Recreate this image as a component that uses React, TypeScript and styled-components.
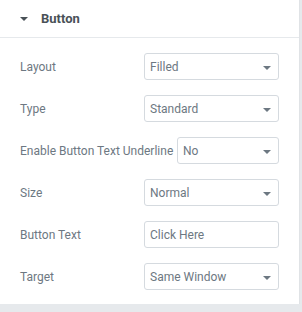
import React from "react";
import styled, { createGlobalStyle } from "styled-components";

const GlobalStyle = createGlobalStyle`
  html, body {
    margin: 0;
    padding: 0;
    background: #e6e9ec;
    font-family: Roboto, "Liberation Sans", Arial, sans-serif;
  }
`;

type Control =
  | { label: string; kind: "select"; value: string; wide?: boolean }
  | { label: string; kind: "text"; value: string };

const controls: Control[] = [
  { label: "Layout", kind: "select", value: "Filled" },
  { label: "Type", kind: "select", value: "Standard" },
  { label: "Enable Button Text Underline", kind: "select", value: "No", wide: true },
  { label: "Size", kind: "select", value: "Normal" },
  { label: "Button Text", kind: "text", value: "Click Here" },
  { label: "Target", kind: "select", value: "Same Window" },
];

const App = () => (
  <>
    <GlobalStyle />
    <Panel>
      <SectionHeader>
        <Caret />
        <Title>Button</Title>
      </SectionHeader>
      <Controls>
        {controls.map((c) => (
          <Row key={c.label}>
            <Label>{c.label}</Label>
            <Field $wide={c.kind === "select" && !!c.wide}>
              <Value>{c.value}</Value>
              {c.kind === "select" && <SelectArrow />}
            </Field>
          </Row>
        ))}
      </Controls>
    </Panel>
  </>
);

const Panel = styled.div`
  width: 300px;
  background: #ffffff;
  border-right: 1px solid #e0e3e6;
  box-sizing: border-box;
`;

const SectionHeader = styled.div`
  display: flex;
  align-items: center;
  height: 37px;
  padding-left: 20px;
  border-bottom: 1px solid #e6e9ec;
`;

const Caret = styled.span`
  width: 0;
  height: 0;
  border-left: 4px solid transparent;
  border-right: 4px solid transparent;
  border-top: 4px solid #495157;
  margin-right: 13px;
  margin-top: 1px;
`;

const Title = styled.div`
  font-size: 13px;
  font-weight: 700;
  color: #495157;
`;

const Controls = styled.div`
  display: flex;
  flex-direction: column;
  gap: 15px;
  padding: 15px 20px 14px 20px;
`;

const Row = styled.div`
  display: flex;
  align-items: center;
  justify-content: space-between;
  height: 27px;
`;

const Label = styled.div`
  font-size: 12px;
  color: #6d7882;
  white-space: nowrap;
`;

const Field = styled.div<{ $wide: boolean }>`
  position: relative;
  display: flex;
  align-items: center;
  box-sizing: border-box;
  width: ${(p) => (p.$wide ? "102px" : "135px")};
  height: 27px;
  border: 1px solid #d5dadf;
  border-radius: 3px;
  padding-left: 5px;
`;

const Value = styled.span`
  font-size: 12px;
  color: #6d7882;
`;

const SelectArrow = styled.span`
  position: absolute;
  right: 7px;
  top: 12px;
  width: 0;
  height: 0;
  border-left: 4px solid transparent;
  border-right: 4px solid transparent;
  border-top: 4px solid #6d7882;
`;

export default App;
